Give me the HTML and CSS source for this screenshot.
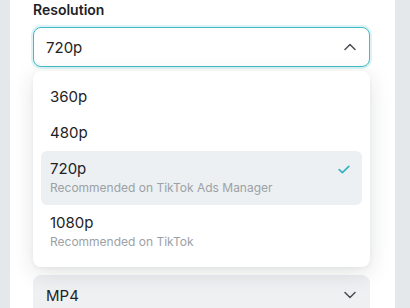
FILE: index.html
```html
<!DOCTYPE html>
<html lang="en">
<head>
<meta charset="utf-8">
<title>Export settings</title>
<link rel="stylesheet" href="styles.css">
</head>
<body>
<div class="page">
  <div class="strip strip-left"></div>
  <main class="panel">
    <div class="field">
      <div class="label">Resolution</div>
      <div class="select-wrap">
        <div class="select select-open">
          <span class="value">720p</span>
          <svg class="chev" width="12" height="8" viewBox="0 0 12 8"><path d="M1 6.5 L6 1.5 L11 6.5" fill="none" stroke="#4a4f55" stroke-width="1.5" stroke-linecap="round" stroke-linejoin="round"/></svg>
        </div>
        <ul class="menu">
          <li class="item"><span class="title">360p</span></li>
          <li class="item"><span class="title">480p</span></li>
          <li class="item item-selected">
            <div class="item-text">
              <span class="title">720p</span>
              <span class="sub">Recommended on TikTok Ads Manager</span>
            </div>
            <svg class="check" width="12" height="9" viewBox="0 0 12 9"><path d="M1.2 4.6 L4.4 7.6 L10.8 1.4" fill="none" stroke="#36b3c0" stroke-width="1.7" stroke-linecap="round" stroke-linejoin="round"/></svg>
          </li>
          <li class="item">
            <div class="item-text">
              <span class="title">1080p</span>
              <span class="sub">Recommended on TikTok</span>
            </div>
          </li>
        </ul>
      </div>
    </div>
    <div class="field field-format">
      <div class="select select-muted">
        <span class="value">MP4</span>
        <svg class="chev" width="12" height="8" viewBox="0 0 12 8"><path d="M1 1.5 L6 6.5 L11 1.5" fill="none" stroke="#4a4f55" stroke-width="1.5" stroke-linecap="round" stroke-linejoin="round"/></svg>
      </div>
    </div>
  </main>
  <div class="strip strip-right"></div>
</div>
</body>
</html>
```
FILE: styles.css
```css
* { box-sizing: border-box; }
html, body { margin: 0; padding: 0; }
body {
  width: 410px;
  height: 308px;
  overflow: hidden;
  font-family: "Inter", "Open Sans", sans-serif;
  color: #1e2226;
  background: #e5e8eb;
}
.page {
  display: flex;
  height: 308px;
}
.strip { background: #e5e8eb; flex: none; }
.strip-left { width: 10px; }
.strip-right { width: 15px; }
.panel {
  flex: 1;
  background: #ffffff;
  padding: 0 25px 0 23px;
}
.label {
  font-size: 14px;
  font-weight: 600;
  line-height: 20px;
  color: #1e2226;
}
.select-wrap { position: relative; margin-top: 7px; }
.select {
  height: 40px;
  border-radius: 8px;
  display: flex;
  align-items: center;
  justify-content: space-between;
  padding: 0 13px 0 12px;
  font-size: 15px;
}
.select-open {
  border: 1px solid #3fbcc7;
  box-shadow: 0 0 0 2px #dcf3f5;
  background: #fff;
}
.select-muted {
  background: #eef0f2;
  border: 1px solid #eef0f2;
}
.menu {
  position: absolute;
  top: 44px;
  left: 0;
  right: 0;
  margin: 0;
  padding: 8px;
  list-style: none;
  background: #fff;
  border-radius: 8px;
  box-shadow: 0 6px 22px rgba(30, 40, 50, 0.13), 0 1px 4px rgba(30, 40, 50, 0.05);
  z-index: 2;
}
.item {
  display: flex;
  align-items: center;
  justify-content: space-between;
  min-height: 36px;
  padding: 0 12px 0 9px;
  border-radius: 6px;
}
.item .title { font-size: 15px; line-height: 20px; }
.item-text {
  display: flex;
  flex-direction: column;
  padding: 8px 0;
}
.sub {
  font-size: 12px;
  line-height: 18px;
  color: #9ca1a6;
}
.item-selected { background: #ecf0f2; align-items: flex-start; }
.item-selected .check { margin-top: 14px; }
.field-format { margin-top: 208px; }
```
